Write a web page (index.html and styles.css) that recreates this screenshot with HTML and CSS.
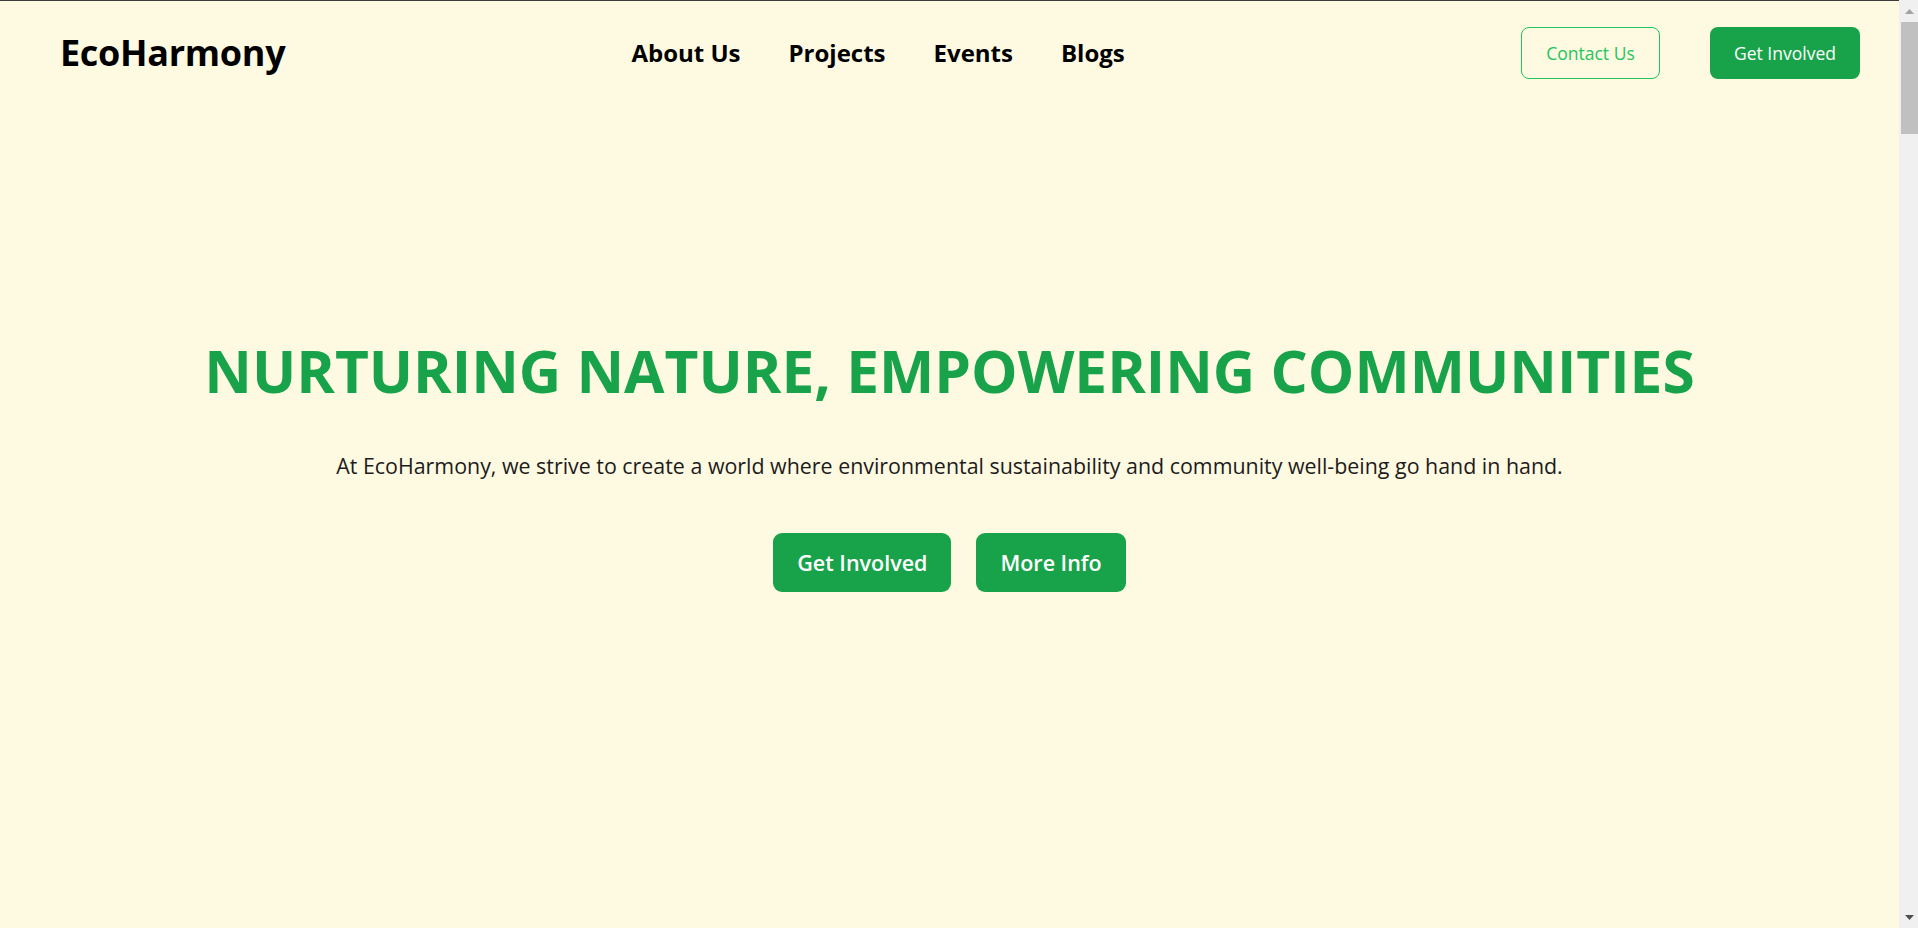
FILE: index.html
```html
<!DOCTYPE html>
<html lang="en">
<head>
<meta charset="utf-8">
<title>EcoHarmony</title>
<link rel="stylesheet" href="styles.css">
</head>
<body>
<div class="page">
  <header class="site-header">
    <a class="logo" href="#">EcoHarmony</a>
    <nav class="main-nav">
      <a href="#">About Us</a>
      <a href="#">Projects</a>
      <a href="#">Events</a>
      <a href="#">Blogs</a>
    </nav>
    <div class="header-actions">
      <a class="btn btn-outline" href="#">Contact Us</a>
      <a class="btn btn-solid" href="#">Get Involved</a>
    </div>
  </header>
  <main>
    <section class="hero">
      <h1 class="hero-title">NURTURING NATURE, EMPOWERING COMMUNITIES</h1>
      <p class="hero-text">At EcoHarmony, we strive to create a world where environmental sustainability and community well-being go hand in hand.</p>
      <div class="hero-actions">
        <a class="btn-lg" href="#">Get Involved</a>
        <a class="btn-lg" href="#">More Info</a>
      </div>
    </section>
    <section class="rest"></section>
  </main>
</div>
<div class="scrollbar" aria-hidden="true">
  <div class="sb-arrow sb-up">
    <svg width="9" height="5" viewBox="0 0 9 5"><polygon points="4.5,0 9,5 0,5" fill="#a3a3a3"/></svg>
  </div>
  <div class="sb-thumb"></div>
  <div class="sb-arrow sb-down">
    <svg width="9" height="5" viewBox="0 0 9 5"><polygon points="0,0 9,0 4.5,5" fill="#505050"/></svg>
  </div>
</div>
</body>
</html>
```
FILE: styles.css
```css
* { box-sizing: border-box; }
html, body { margin: 0; padding: 0; }
body {
  background: #fef9e1;
  font-family: "Open Sans", "Noto Sans", sans-serif;
  color: #111;
}
a { text-decoration: none; color: inherit; }

.page {
  margin-right: 19px;
  border-top: 1px solid #3c3c3c;
}

.site-header {
  display: flex;
  align-items: center;
  height: 103px;
  padding: 0 39px 0 60px;
}
.logo {
  font-size: 36px;
  font-weight: 700;
  color: #000;
  letter-spacing: -0.3px;
}
.main-nav {
  display: flex;
  gap: 48px;
  margin-left: 346px;
}
.main-nav a {
  font-size: 24px;
  font-weight: 700;
  color: #000;
}
.header-actions {
  display: flex;
  gap: 50px;
  margin-left: auto;
}
.btn {
  display: inline-flex;
  align-items: center;
  justify-content: center;
  height: 52px;
  border-radius: 8px;
  font-size: 17.5px;
  font-weight: 500;
}
.btn-outline {
  width: 139px;
  border: 1px solid #22c55e;
  color: #22c55e;
}
.btn-solid {
  width: 150px;
  background: #18a34a;
  color: #fff;
}

.hero {
  display: flex;
  flex-direction: column;
  align-items: center;
  padding-top: 231px;
}
.hero-title {
  margin: 0;
  font-size: 58.6px;
  font-weight: 700;
  line-height: 71px;
  color: #18a34a;
}
.hero-text {
  margin: 46px 0 0;
  font-size: 21.4px;
  line-height: 28px;
  color: #1c1c1c;
}
.hero-actions {
  display: flex;
  gap: 25px;
  margin-top: 53px;
}
.btn-lg {
  display: inline-flex;
  align-items: center;
  justify-content: center;
  height: 59px;
  padding: 0 24px;
  border-radius: 9px;
  background: #18a34a;
  color: #fff;
  font-size: 21.5px;
  font-weight: 600;
}
.rest { height: 6700px; }

.scrollbar {
  position: fixed;
  top: 0;
  right: 0;
  width: 19px;
  height: 100vh;
  background: #f0f0f0;
  display: flex;
  flex-direction: column;
}
.sb-arrow {
  height: 22px;
  display: flex;
  align-items: center;
  justify-content: center;
  padding-left: 2px;
}
.sb-thumb {
  height: 112px;
  margin-left: 2px;
  background: #c0c0c0;
}
.sb-down {
  margin-top: auto;
  height: 24px;
  align-items: flex-start;
  padding-top: 11px;
}
```
